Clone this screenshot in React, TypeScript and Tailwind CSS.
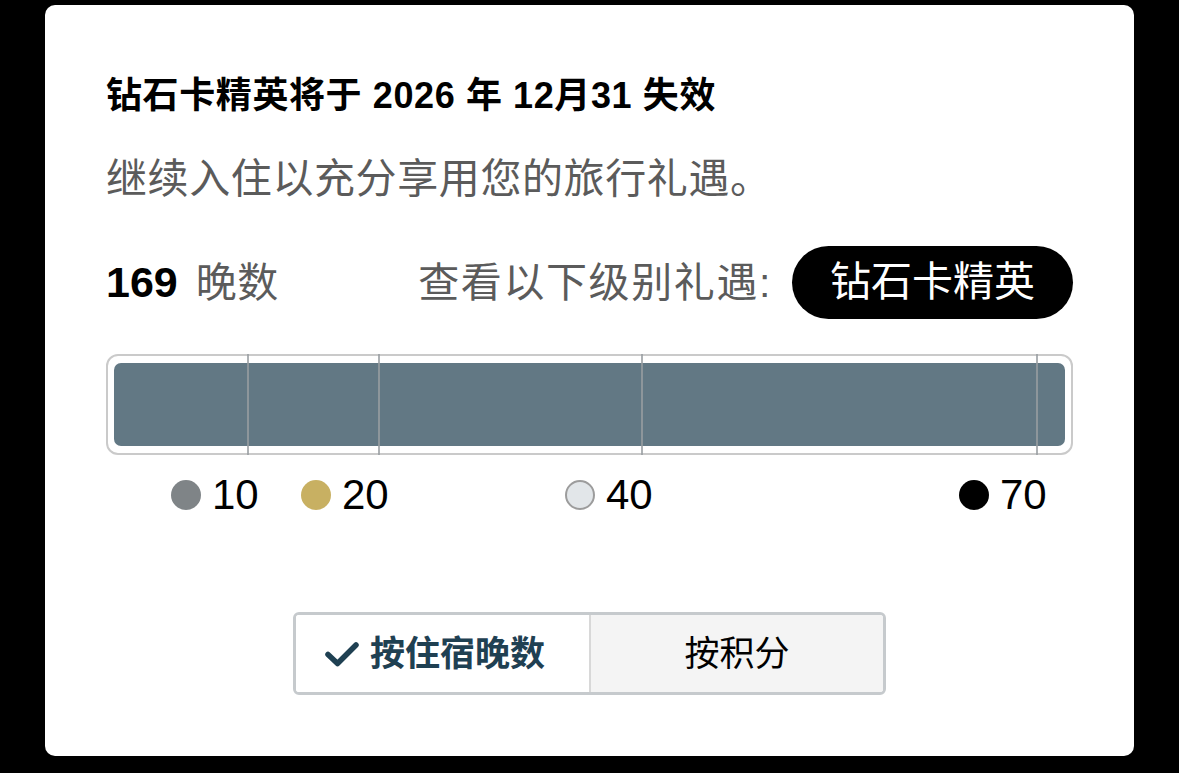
import React from 'react';

const ticks = [141, 272, 535, 930];

const levels = [
  { label: '10', left: 65, dot: 'bg-[#7f8487]' },
  { label: '20', left: 195, dot: 'bg-[#c8b062]' },
  { label: '40', left: 459, dot: 'bg-[#e2e6e9] border-2 border-[#9c9c9c]' },
  { label: '70', left: 853, dot: 'bg-black' },
];

const CheckIcon = () => (
  <svg width="36" height="28" viewBox="0 0 36 28" fill="none">
    <path d="M4 14.5 L13.5 23.5 L32 5" stroke="#1f4052" strokeWidth="5.5" strokeLinecap="round" strokeLinejoin="round" />
  </svg>
);

const App: React.FC = () => {
  return (
    <div
      className="min-h-[773px] w-full bg-black pt-[5px] pl-[45px]"
      style={{ fontFamily: '"Liberation Sans", "Noto Sans CJK SC", sans-serif' }}
    >
      <div className="w-[1089px] h-[751px] bg-white rounded-[10px] px-[61px] pt-[70px]">
        {/* Header */}
        <h1 className="text-[36px] leading-[42px] font-bold tracking-[0.6px] text-black">
          钻石卡精英将于 2026 年 12月31 失效
        </h1>
        <p className="mt-[38px] text-[41px] leading-[48px] tracking-[0.6px] text-[#5b5b5b]">
          继续入住以充分享用您的旅行礼遇。
        </p>

        {/* Nights + tier */}
        <div className="mt-[43px] h-[73px] flex items-center justify-between">
          <div className="flex items-baseline leading-[48px]">
            <span className="text-[43px] font-bold text-black">169</span>
            <span className="ml-[18px] text-[41px] tracking-[0.6px] text-[#5b5b5b]">晚数</span>
          </div>
          <div className="flex items-center">
            <span className="text-[41px] leading-[48px] tracking-[1.6px] text-[#5b5b5b]">查看以下级别礼遇:</span>
            <span className="ml-[20px] h-[73px] px-[38px] rounded-full bg-black text-white text-[41px] leading-[73px]">
              钻石卡精英
            </span>
          </div>
        </div>

        {/* Progress bar */}
        <div className="relative mt-[35px] h-[101px] rounded-[12px] border-2 border-[#cacaca] px-[6px] py-[7px]">
          <div className="h-full w-full rounded-[7px] bg-[#627884]" />
          {ticks.map((x) => (
            <div
              key={x}
              className="absolute top-[-2px] bottom-[-2px] w-[2px] bg-[#999ea1]/80"
              style={{ left: x - 2 }}
            />
          ))}
        </div>

        {/* Legend */}
        <div className="relative mt-[20px] h-[40px]">
          {levels.map((l) => (
            <div key={l.label} className="absolute top-0 flex items-center h-[40px]" style={{ left: l.left }}>
              <span className={`w-[30px] h-[30px] rounded-full ${l.dot}`} />
              <span className="ml-[11px] text-[42px] leading-[40px] text-black">{l.label}</span>
            </div>
          ))}
        </div>

        {/* Toggle */}
        <div className="mt-[97px] mx-auto w-[593px] h-[83px] flex rounded-[6px] border-[3px] border-[#c6cacd] overflow-hidden">
          <button className="w-[293px] h-full bg-white flex items-center justify-center gap-[10px] pr-[16px]">
            <CheckIcon />
            <span className="text-[35px] leading-[42px] font-bold text-[#1f4052]">按住宿晚数</span>
          </button>
          <div className="w-[2px] bg-[#d8d8d8]" />
          <button className="flex-1 h-full bg-[#f4f4f4] flex items-center justify-center">
            <span className="text-[35px] leading-[42px] text-black">按积分</span>
          </button>
        </div>
      </div>
    </div>
  );
};

export default App;
